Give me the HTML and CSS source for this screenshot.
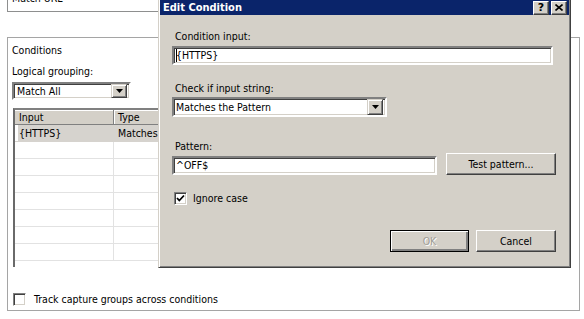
FILE: index.html
```html
<!DOCTYPE html>
<html lang="en">
<head>
    <meta charset="UTF-8">
    <title>Edit Condition</title>
    <link rel="stylesheet" href="styles.css">
</head>
<body>

    <div class="page">
        <div class="url-box">Match URL</div>

        <div class="group">
            <div class="group-title">Conditions</div>
            <div class="field-label">Logical grouping:</div>
            <div class="combo combo-grouping">
                <span class="combo-text">Match All</span>
                <span class="drop-btn"><svg width="7" height="4" viewBox="0 0 7 4"><path d="M0 0H7L3.5 4Z" fill="#000"/></svg></span>
            </div>

            <div class="list">
                <div class="list-head">
                    <div class="cell col-input">Input</div>
                    <div class="cell col-type">Type</div>
                </div>
                <div class="list-row selected">
                    <div class="cell col-input"><span class="focus-mark"></span>{HTTPS}</div>
                    <div class="cell col-type">Matches the Pattern</div>
                </div>
                <div class="list-row"><div class="cell col-input"></div><div class="cell col-type"></div></div>
                <div class="list-row"><div class="cell col-input"></div><div class="cell col-type"></div></div>
                <div class="list-row"><div class="cell col-input"></div><div class="cell col-type"></div></div>
                <div class="list-row"><div class="cell col-input"></div><div class="cell col-type"></div></div>
                <div class="list-row"><div class="cell col-input"></div><div class="cell col-type"></div></div>
                <div class="list-row"><div class="cell col-input"></div><div class="cell col-type"></div></div>
                <div class="list-row"><div class="cell col-input"></div><div class="cell col-type"></div></div>
            </div>

            <div class="check-row track-row">
                <span class="checkbox"></span>
                <span>Track capture groups across conditions</span>
            </div>
        </div>
    </div>

    <!-- modal window sits on top of the rule editor -->
    <div class="dialog">
        <div class="title-bar">
            <span class="title">Edit Condition</span>
            <span class="title-btn help">?</span>
            <span class="title-btn close"><svg width="8" height="7" viewBox="0 0 8 7"><path d="M0.5 0.5L7.5 6.5M7.5 0.5L0.5 6.5" stroke="#000" stroke-width="1.6"/></svg></span>
        </div>

        <div class="dialog-body">
            <div class="label label-first">Condition input:</div>
            <div class="textbox textbox-input"><span class="caret"></span>{HTTPS}</div>

            <div class="label label-check">Check if input string:</div>
            <div class="combo combo-check">
                <span class="combo-text">Matches the Pattern</span>
                <span class="drop-btn"><svg width="7" height="4" viewBox="0 0 7 4"><path d="M0 0H7L3.5 4Z" fill="#000"/></svg></span>
            </div>

            <div class="label label-pattern">Pattern:</div>
            <div class="pattern-row">
                <div class="textbox textbox-pattern">^OFF$</div>
                <div class="button test-btn">Test pattern...</div>
            </div>

            <div class="check-row ignore-row">
                <span class="checkbox"><svg width="9" height="9" viewBox="0 0 9 9"><path d="M1 4L3.3 6.5L8 1.5" fill="none" stroke="#000" stroke-width="1.8"/></svg></span>
                <span>Ignore case</span>
            </div>

            <div class="button-row">
                <div class="button default disabled">OK</div>
                <div class="button">Cancel</div>
            </div>
        </div>
    </div>

</body>
</html>
```

FILE: styles.css
```css
* {
    box-sizing: border-box;
}

body {
    margin: 0;
    width: 584px;
    height: 319px;
    overflow: hidden;
    background-color: #ffffff;
    color: #000;
    font-family: 'DejaVu Sans Condensed', 'DejaVu Sans', sans-serif;
    font-size: 10.5px;
    line-height: 13px;
}

.page {
    padding-left: 7px;
}

.url-box {
    margin-top: -9px;
    width: 562px;
    height: 21px;
    padding: 1px 4px;
    border: 1px solid #8e8f8f;
    border-top: none;
}

.group {
    margin-top: 25px;
    width: 573px;
    height: 274px;
    border: 1px solid #a5a5a5;
    padding-left: 4px;
}

.group-title {
    margin-top: 6px;
}

.field-label {
    margin-top: 8px;
}

/* sunken controls */
.combo,
.textbox {
    background-color: #fff;
    border: 2px solid;
    border-color: #808080 #fff #fff #808080;
    box-shadow: inset 1px 1px #404040, inset -1px -1px #d4d0c8;
}

.combo {
    display: flex;
    align-items: center;
    justify-content: space-between;
    padding: 0 2px 0 3px;
}

.combo-grouping {
    margin-top: 4px;
    width: 119px;
    height: 18px;
}

.drop-btn {
    display: flex;
    align-items: center;
    justify-content: center;
    width: 16px;
    height: 14px;
    background-color: #d4d0c8;
    border: 1px solid;
    border-color: #d4d0c8 #404040 #404040 #d4d0c8;
    box-shadow: inset 1px 1px #fff, inset -1px -1px #808080;
}

.list {
    margin-top: 8px;
    margin-left: 1px;
    width: 320px;
    height: 159px;
    border-top: 2px solid #808080;
    border-left: 2px solid #6a6a6a;
    background-color: #fff;
    overflow: hidden;
}

.list-head {
    display: flex;
    height: 15px;
    background-color: #d4d0c8;
    border-bottom: 1px solid #808080;
    box-shadow: inset 0 1px #fff;
}

.list-head .col-input {
    border-right: 1px solid #808080;
    box-shadow: 1px 0 #fff;
}

.list-row {
    display: flex;
    height: 17px;
    border-bottom: 1px solid #e2e2e2;
}

.list-row.selected {
    background-color: #d6d3ce;
    border-bottom-color: #d6d3ce;
}

.cell {
    display: flex;
    align-items: center;
    padding-left: 4px;
    white-space: nowrap;
}

.col-input {
    width: 99px;
}

.list-row .col-input {
    border-right: 1px solid #e2e2e2;
}

.list-row.selected .col-input {
    border-right-color: #d6d3ce;
}

.focus-mark {
    width: 3px;
    height: 16px;
    margin-left: -4px;
    margin-right: 1px;
    background-color: #fff;
}

.col-type {
    flex: 1;
}

.check-row {
    display: flex;
    align-items: center;
    height: 13px;
}

.track-row {
    margin-top: 26px;
    margin-left: 1px;
    gap: 8px;
}

.checkbox {
    display: flex;
    align-items: center;
    justify-content: center;
    width: 13px;
    height: 13px;
    background-color: #fff;
    border: 1px solid;
    border-color: #808080 #fff #fff #808080;
    box-shadow: inset 1px 1px #404040, inset -1px -1px #d4d0c8;
}

/* dialog window */
.dialog {
    position: absolute;
    left: 158px;
    top: -2px;
    width: 413px;
    height: 270px;
    padding: 1px;
    background-color: #d4d0c8;
    border: 1px solid;
    border-color: #d4d0c8 #404040 #404040 #d4d0c8;
    box-shadow: inset 1px 1px #fff, inset -1px -1px #808080;
}

.title-bar {
    display: flex;
    align-items: center;
    height: 15px;
    padding: 0 2px 0 3px;
    background-color: #0a246a;
    color: #fff;
}

.title {
    flex: 1;
    font-weight: bold;
    font-size: 11px;
}

.title-btn {
    display: flex;
    align-items: center;
    justify-content: center;
    width: 16px;
    height: 14px;
    margin-left: 2px;
    background-color: #d4d0c8;
    color: #000;
    font-family: 'DejaVu Sans', sans-serif;
    font-weight: bold;
    font-size: 11px;
    border: 1px solid;
    border-color: #fff #404040 #404040 #fff;
    box-shadow: inset -1px -1px #808080;
}

.dialog-body {
    display: flex;
    flex-direction: column;
    padding: 0 13px 0 12px;
}

.label-first {
    margin-top: 15px;
}

.label {
    padding-left: 3px;
}

.textbox {
    display: flex;
    align-items: center;
    height: 19px;
    padding-left: 2px;
}

.textbox-input {
    margin-top: 3px;
    width: 381px;
}

.caret {
    width: 1px;
    height: 13px;
    margin-right: -1px;
    background-color: #000;
}

.label-check {
    margin-top: 17px;
}

.combo-check {
    margin-top: 2px;
    width: 215px;
    height: 20px;
    padding-left: 2px;
}

.combo-check .drop-btn {
    height: 16px;
}

.label-pattern {
    margin-top: 23px;
}

.pattern-row {
    display: flex;
    align-items: flex-end;
    gap: 9px;
    height: 22px;
}

.textbox-pattern {
    width: 265px;
}

.button {
    display: flex;
    align-items: center;
    justify-content: center;
    height: 22px;
    background-color: #d4d0c8;
    border: 1px solid;
    border-color: #fff #404040 #404040 #fff;
    box-shadow: inset -1px -1px #808080;
}

.test-btn {
    width: 110px;
}

.ignore-row {
    margin-top: 17px;
    margin-left: 2px;
    gap: 6px;
}

.button-row {
    display: flex;
    justify-content: flex-end;
    gap: 7px;
    margin-top: 25px;
}

.button-row .button {
    width: 80px;
}

.button.default {
    width: 79px;
    border-color: #000;
    box-shadow: inset 1px 1px #fff, inset -2px -2px #808080;
}

.button.disabled {
    color: #a09d96;
    text-shadow: 1px 1px #fff;
}
```
